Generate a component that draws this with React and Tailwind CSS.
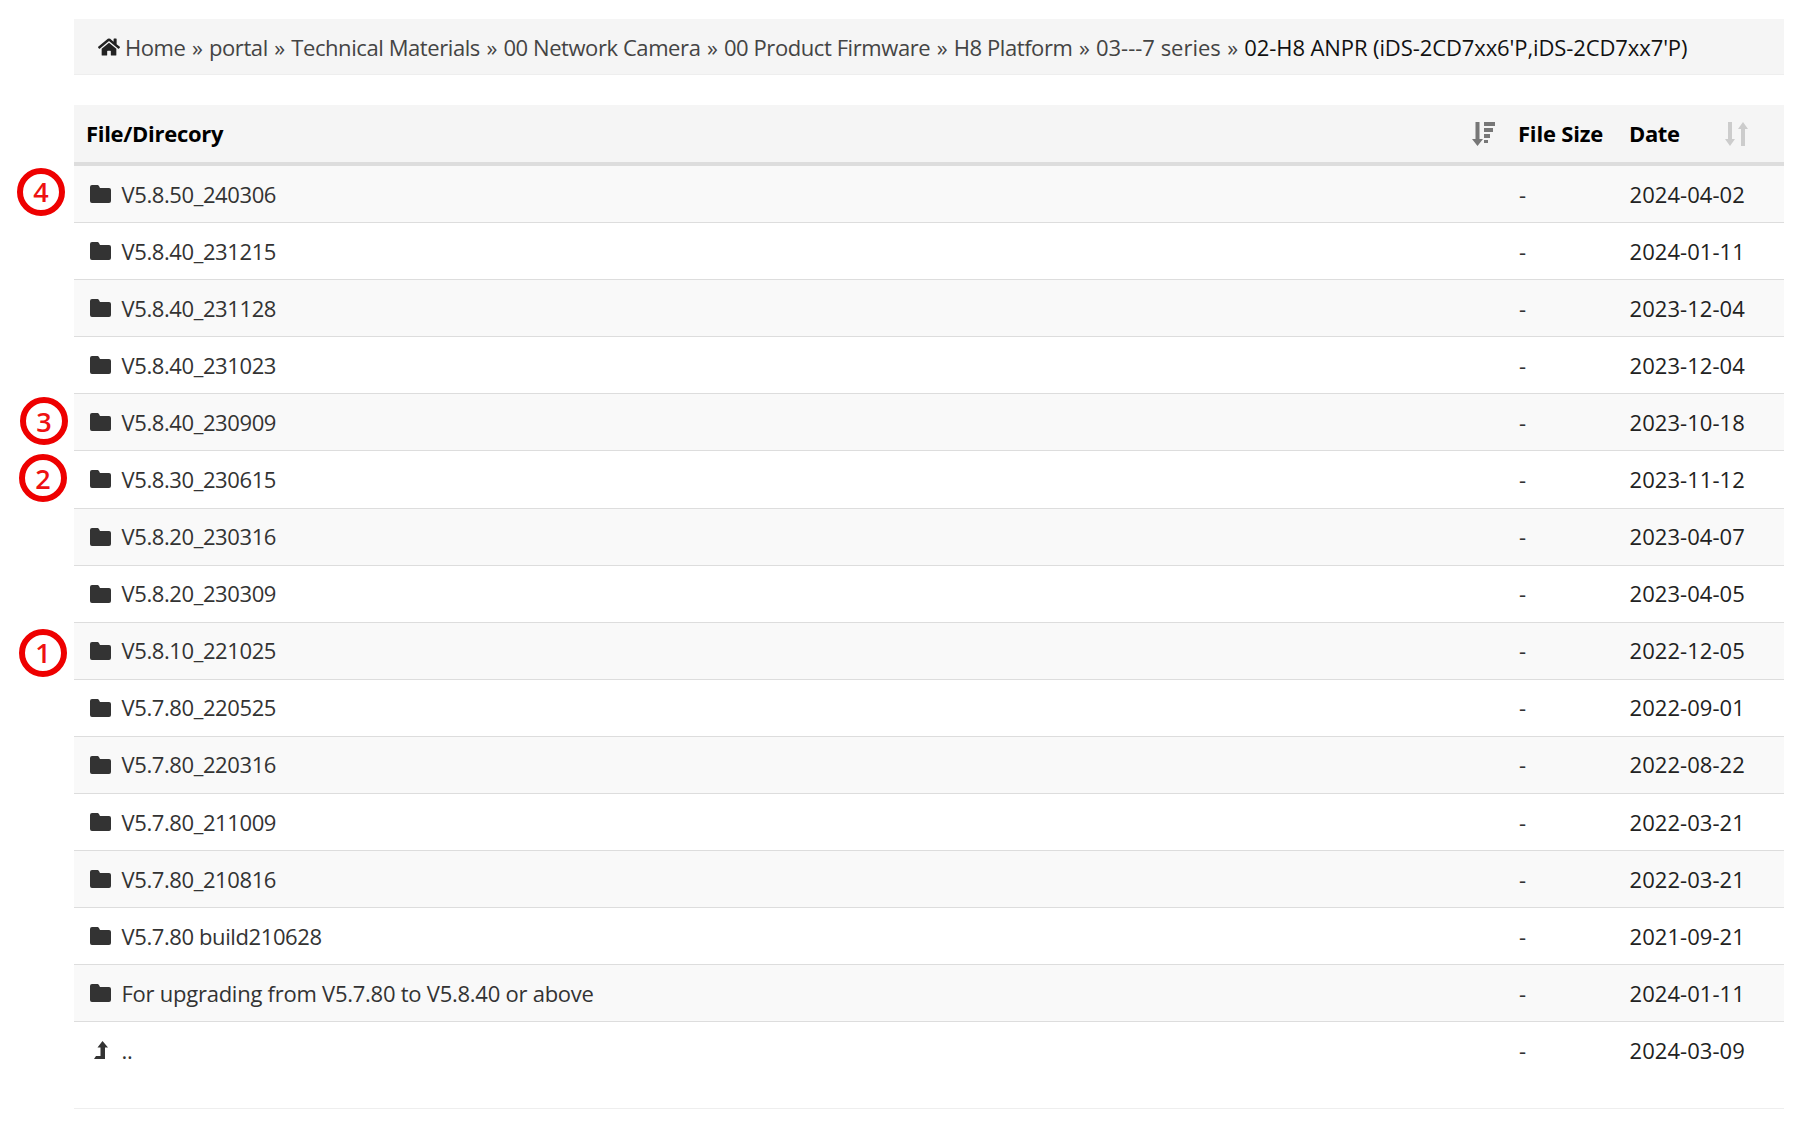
import React from 'react';
import { FaHome } from 'react-icons/fa';

const crumbs = ['portal', 'Technical Materials', '00 Network Camera', '00 Product Firmware', 'H8 Platform'];

const rows = [
  { name: 'V5.8.50_240306', date: '2024-04-02', mark: '4', markClass: 'left-[-57px] top-[1.5px]' },
  { name: 'V5.8.40_231215', date: '2024-01-11' },
  { name: 'V5.8.40_231128', date: '2023-12-04' },
  { name: 'V5.8.40_231023', date: '2023-12-04' },
  { name: 'V5.8.40_230909', date: '2023-10-18', mark: '3', markClass: 'left-[-54px] top-[3px]' },
  { name: 'V5.8.30_230615', date: '2023-11-12', mark: '2', markClass: 'left-[-55px] top-[3px]' },
  { name: 'V5.8.20_230316', date: '2023-04-07' },
  { name: 'V5.8.20_230309', date: '2023-04-05' },
  { name: 'V5.8.10_221025', date: '2022-12-05', mark: '1', markClass: 'left-[-55px] top-[6px]' },
  { name: 'V5.7.80_220525', date: '2022-09-01' },
  { name: 'V5.7.80_220316', date: '2022-08-22' },
  { name: 'V5.7.80_211009', date: '2022-03-21' },
  { name: 'V5.7.80_210816', date: '2022-03-21' },
  { name: 'V5.7.80 build210628', date: '2021-09-21' },
  { name: 'For upgrading from V5.7.80 to V5.8.40 or above', date: '2024-01-11', nameClass: 'tracking-[-0.25px]' },
];

const FolderIcon = () => (
  <svg width="21" height="18" viewBox="0 0 21 18" fill="currentColor">
    <path d="M2 0h5c1 0 1.7.5 2.1 1.3L10 3h9a2 2 0 0 1 2 2v11a2 2 0 0 1-2 2H2a2 2 0 0 1-2-2V2a2 2 0 0 1 2-2z" />
  </svg>
);

const UpIcon = () => (
  <svg width="14" height="18" viewBox="0 0 14 18" fill="currentColor" className="ml-[4px]">
    <path d="M8.5 0 14 6.5h-3V18H0l2-3h4.5V6.5h-3z" />
  </svg>
);

const SortName = () => (
  <svg width="23" height="24" viewBox="0 0 23 24" className="text-[#777]" fill="currentColor">
    <path d="M3.5 0h4v17H11l-5.5 7L0 17h3.5z" />
    <path d="M12 0h11v4H12zM12 6h9v4h-9zM12 12h6v4h-6zM12 18h4v3h-4z" />
  </svg>
);

const SortDate = () => (
  <svg width="23" height="24" viewBox="0 0 23 24" className="text-[#ccc]" fill="currentColor">
    <path d="M3 0h4v17h3l-5 7-5-7h3z" />
    <path d="M16 24h4V7h3l-5-7-5 7h3z" />
  </svg>
);

const Row = ({ icon, name, nameClass = 'tracking-[-0.4px]', date, mark, markClass, striped, last }) => (
  <div className={`relative flex items-start border-b ${last ? 'h-[87px] border-[#eee]' : 'h-[57.1px] border-[#ddd]'} ${striped ? 'bg-[#f9f9f9]' : 'bg-white'}`}>
    {mark && (
      <div className={`absolute ${markClass} flex h-[48px] w-[48px] items-center justify-center rounded-full border-[6px] border-[#ee0000] bg-white text-[27px] font-semibold leading-none text-[#ee1111]`}>
        {mark}
      </div>
    )}
    <div className="flex h-[56px] min-w-0 flex-1 items-center pl-[16px]">
      <span className="flex w-[31.5px] shrink-0 justify-start text-[#333]">{icon}</span>
      <span className={`text-[#333] ${nameClass}`}>{name}</span>
    </div>
    <div className="flex h-[56px] w-[112px] items-center pl-[2px] text-[#333]">-</div>
    <div className="flex h-[56px] w-[155px] items-center pl-[0.5px] tracking-[0.05px] text-[#222]">{date}</div>
  </div>
);

export default function App() {
  return (
    <div className="min-h-[1128px] bg-white pl-[74px] pr-[15px] pt-[19px] font-['Open_Sans','Noto_Sans',sans-serif] text-[22px]">
      <div className="flex h-[56px] items-center whitespace-nowrap border-b border-[#eee] bg-[#f5f5f5] pl-[24px] pt-[2px] tracking-[-0.42px] text-[#444]">
        <FaHome className="mb-[2px] mr-[5px] h-[20px] w-[22px] text-[#222]" />
        <span>Home</span>
        {crumbs.map((c) => (
          <span key={c}>
            <span className="mx-[6.5px]">»</span>{c}
          </span>
        ))}
        <span className="mx-[6.5px]">»</span>
        <span className="tracking-[0px]">03---7 series</span>
        <span className="mx-[6.5px]">»</span>
        <span className="tracking-[-0.1px] text-[#111]">02-H8 ANPR (iDS-2CD7xx6'P,iDS-2CD7xx7'P)</span>
      </div>

      <div className="mt-[30px]">
        <div className="flex h-[61px] items-center border-b-[4px] border-[#ddd] bg-[#f5f5f5] font-bold text-black">
          <div className="flex flex-1 items-center justify-between pl-[12px] pr-[22px]">
            <span className="tracking-[-0.3px]">File/Direcory</span>
            <SortName />
          </div>
          <div className="w-[112px] pl-[1px] tracking-[-0.2px]">File Size</div>
          <div className="flex w-[155px] items-center">
            <span className="tracking-[-0.4px]">Date</span>
            <span className="ml-[45px] flex"><SortDate /></span>
          </div>
        </div>

        {rows.map((r, i) => (
          <Row key={r.name} {...r} striped={i % 2 === 0} icon={<FolderIcon />} />
        ))}
        <Row icon={<UpIcon />} name=".." date="2024-03-09" last />
      </div>
    </div>
  );
}
